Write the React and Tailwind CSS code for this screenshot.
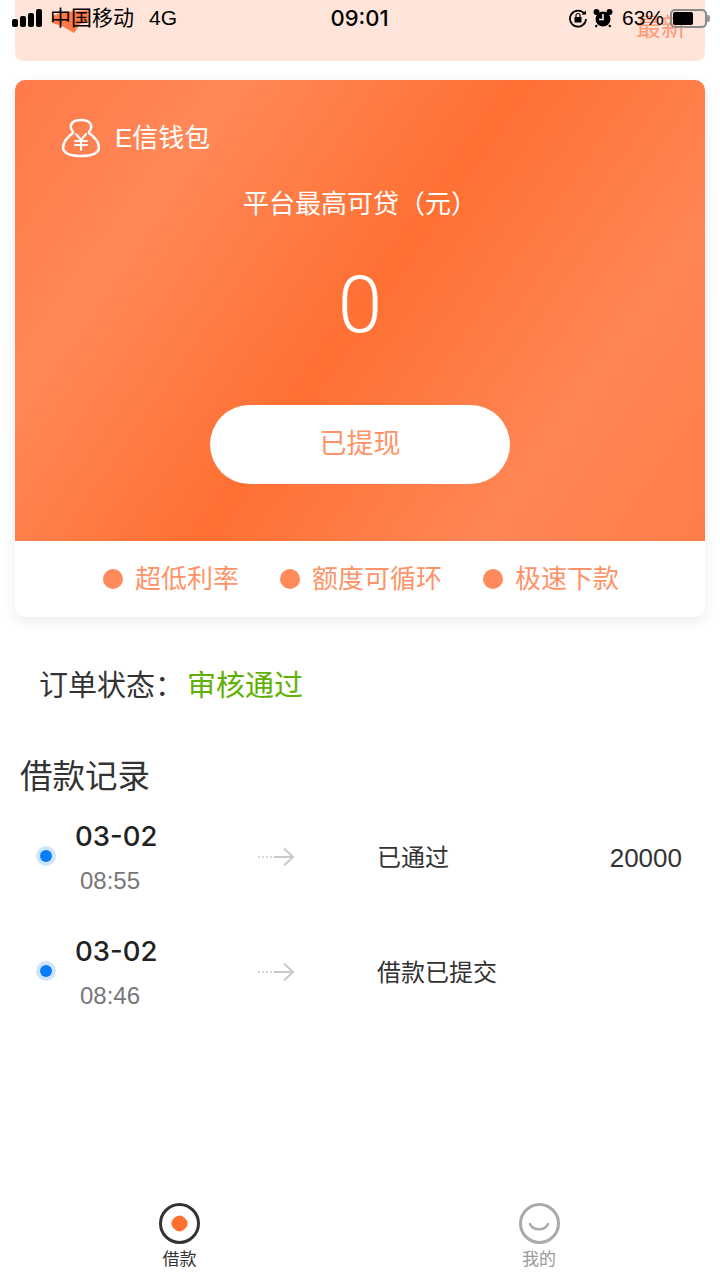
function Feature({ label }) {
  return (
    <div className="flex items-center gap-[12px]">
      <span className="w-[20px] h-[20px] rounded-full bg-[#ff8a5c]" />
      <span className="text-[26px] leading-[36px] text-[#ff9368]">{label}</span>
    </div>
  );
}
function Arrow() {
  return (
    <svg width="38" height="20" viewBox="0 0 38 20" fill="none" stroke="#c9c9c9" strokeWidth="2">
      <path d="M1 10h2M5 10h2M9 10h2M13 10h2" stroke="#d8d8d8" />
      <path d="M17 10h19M27 1.5l9 8.500-9 8.500" />
    </svg>
  );
}
function Record({ time, status, amount }) {
  return (
    <div className="flex items-center h-[115px]">
      <div className="w-[20px] h-[20px] ml-[36px] -mt-[2px] rounded-full bg-[#cfe5ff] flex items-center justify-center shrink-0">
        <span className="w-[12px] h-[12px] rounded-full bg-[#0a7cf5]" />
      </div>
      <div className="w-[201px] pl-[19px] shrink-0">
        <div className="text-[27.500px] leading-[36px] font-medium text-[#222]" style={{ fontFamily: 'Inter,sans-serif' }}>03-02</div>
        <div className="text-[24px] leading-[30px] mt-[12px] ml-[5px] text-[#777]">{time}</div>
      </div>
      <div className="w-[120px] shrink-0 flex"><Arrow /></div>
      <div className="flex-1 text-[24px] leading-[36px] mt-[2px] text-[#333]">{status}</div>
      <div className="text-[26px] leading-[36px] mt-[2px] text-[#333] pr-[38px]">{amount}</div>
    </div>
  );
}
export default function App() {
  return (
    <div className="relative w-[720px] h-[1280px] bg-white overflow-hidden" style={{ fontFamily: '"Liberation Sans","Noto Sans CJK SC",sans-serif' }}>
      <div className="absolute top-0 left-0 right-0 h-[36px] z-10 flex items-center justify-between text-black text-[21px]">
        <div className="flex items-center pl-[12px]">
          <div className="flex items-end gap-[2px] h-[18px] w-[30px]">
            <span className="w-[6px] h-[8px] rounded-[2px] bg-black" />
            <span className="w-[6px] h-[11px] rounded-[2px] bg-black" />
            <span className="w-[6px] h-[14px] rounded-[2px] bg-black" />
            <span className="w-[6px] h-[18px] rounded-[2px] bg-black" />
          </div>
          <span className="ml-[8px]">中国移动</span>
          <span className="ml-[15px]">4G</span>
        </div>
        <div className="absolute left-0 right-0 text-center font-medium text-[22px] -ml-[1px]" style={{ fontFamily: 'Inter,sans-serif' }}>09:01</div>
        <div className="flex items-center pr-[10px]">
          <svg className="-mr-[1px]" width="20" height="20" viewBox="0 0 20 20" fill="none" stroke="black" strokeWidth="1.800"><path d="M16.500 6A8 8 0 1 0 18 11"/><path d="M13.500 6.500h4.500v-4" fill="black" stroke="none"/><rect x="6.500" y="9" width="7" height="5.500" fill="black" stroke="none"/><path d="M8 9V7.500a2 2 0 0 1 4 0V9" strokeWidth="1.200"/></svg>
          <svg className="ml-[6px]" width="20" height="20" viewBox="0 0 20 20"><circle cx="10" cy="11" r="7.500" fill="black"/><circle cx="3.500" cy="4" r="3" fill="black"/><circle cx="16.500" cy="4" r="3" fill="black"/><path d="M10 6v5.500H6" stroke="white" strokeWidth="1.500" fill="none"/><path d="M4 17l-1.500 2M16 17l1.500 2" stroke="black" strokeWidth="2"/></svg>
          <span className="ml-[9px]">63%</span>
          <div className="ml-[6px] w-[37px] h-[19px] rounded-[5px] border-2 border-[#8a8a8a] p-[1px]"><div className="w-[20px] h-full bg-black rounded-[2px]" /></div>
          <span className="w-[3px] h-[7px] bg-[#999] rounded-r-[2px]" />
        </div>
      </div>

      <div className="px-[15px]">
        <div className="h-[61px] rounded-b-[8px] bg-[#ffe4d9] flex justify-between pl-[37px] pr-[19px]">
          <svg className="mt-[10px]" width="38" height="23" viewBox="0 0 38 23" fill="#ff7a45"><path d="M0 6l12-4 26-2v12l-10 2-6 9-12-7-10-3z" /></svg>
          <span className="text-[25px] leading-[36px] mt-[9px] text-[#ff9b78]">最新</span>
        </div>

        <div className="mt-[19px] rounded-[10px] bg-white overflow-hidden shadow-[0_4px_14px_rgba(0,0,0,0.08)]">
          <div className="h-[461px] flex flex-col items-center text-white bg-[linear-gradient(125deg,#ff7a48_0%,#ff8858_22%,#ff7033_50%,#ff8656_78%,#ff7d4a_100%)]">
            <div className="self-start flex items-center pl-[46px] pt-[39px] h-[77px]">
              <svg width="40" height="40" viewBox="0 0 40 40" fill="none" stroke="white" strokeWidth="2.500" strokeLinecap="round">
                <path d="M12 14C8 9 9 2 20 2s12 7 8 12" />
                <path d="M12 15C5 20 2 26 2 30c1 6 9 8 18 8 9 0 17-2 18-8 0-4-3-10-10-15" />
                <path d="M15 16l5 6 5-6M14 23h12M14 27h12M20 22v10" strokeWidth="2" />
              </svg>
              <span className="ml-[14px] text-[26px] leading-[40px]">E信钱包</span>
            </div>
            <div className="mt-[29px] text-[26px] leading-[36px]">平台最高可贷（元）</div>
            <div className="mt-[38px] text-[80px] leading-[90px] font-light" style={{ fontFamily: 'Roboto,sans-serif' }}>0</div>
            <div className="mt-[55px] w-[300px] h-[79px] rounded-full bg-white flex items-center justify-center text-[27px] text-[#ff9368]">已提现</div>
          </div>
          <div className="h-[76px] flex items-center pl-[88px] gap-[41px]">
            <Feature label="超低利率" />
            <Feature label="额度可循环" />
            <Feature label="极速下款" />
          </div>
        </div>
      </div>

      <div className="mt-[47px] pl-[39px] text-[29px] leading-[44px] text-[#333]">
        订单状态：<span className="text-[#5fb000] ml-[3px]">审核通过</span>
      </div>

      <div className="mt-[45px] pl-[20px] text-[32.500px] leading-[48px] text-[#333]">借款记录</div>

      <div className="-mt-[2px]">
        <Record time="08:55" status="已通过" amount="20000" />
        <Record time="08:46" status="借款已提交" />
      </div>

      <div className="absolute left-0 right-0 bottom-0 h-[77px] flex">
        <div className="w-[359px] flex flex-col items-center">
          <div className="w-[41px] h-[41px] rounded-full border-[3px] border-[#333] flex items-center justify-center">
            <span className="w-[15px] h-[15px] rounded-[6px] rotate-45 bg-[#ff6f30]" />
          </div>
          <span className="mt-[4px] text-[17px] leading-[24px] text-[#333]">借款</span>
        </div>
        <div className="w-[360px] flex flex-col items-center">
          <div className="w-[41px] h-[41px] rounded-full border-[3px] border-[#aaa] flex items-center justify-center">
            <svg width="22" height="12" viewBox="0 0 22 12" fill="none" stroke="#aaa" strokeWidth="2.500" strokeLinecap="round" className="mt-[8px]"><path d="M2 2c3 7 15 7 18 0"/></svg>
          </div>
          <span className="mt-[4px] text-[17px] leading-[24px] text-[#999]">我的</span>
        </div>
      </div>
    </div>
  );
}
